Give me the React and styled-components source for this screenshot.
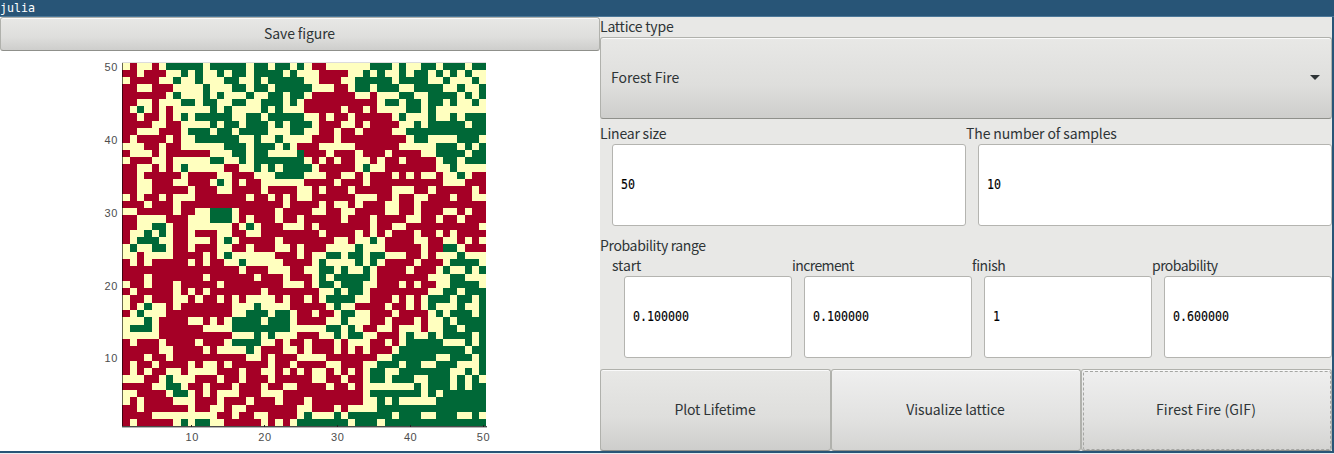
import React from 'react';
import styled, { createGlobalStyle, css } from 'styled-components';

const GlobalStyle = createGlobalStyle`
  html, body { margin: 0; padding: 0; background: #fff; overflow: hidden; }
  *, *::before, *::after { box-sizing: border-box; }
`;

const uiFont = css`
  font-family: "Noto Sans CJK JP", "Open Sans", sans-serif;
  font-size: 14px;
  letter-spacing: ${(p) => (p.$tracking === undefined ? -0.12 : p.$tracking)}px;
  color: #2e3436;
`;

const Window = styled.div`
  width: 1334px;
  height: 454px;
  display: flex;
  flex-direction: column;
  background: #e9ecef;
  ${uiFont}
`;

const TitleBar = styled.header`
  height: 17px;
  background: #285577;
  border-bottom: 1px solid #4c7899;
  color: #fff;
  font-family: "DejaVu Sans Mono", monospace;
  font-size: 11.63px;
  letter-spacing: 0;
  line-height: 16px;
`;

const Content = styled.main`
  height: 436px;
  display: flex;
  border-right: 2px solid #285577;
  border-bottom: 2px solid #285577;
`;

const PlotPane = styled.section`
  width: 600px;
  background: #fff;
  display: flex;
  flex-direction: column;
`;

const ControlPane = styled.section`
  width: 732px;
  background: #e8e8e6;
  display: flex;
  flex-direction: column;
`;

const Button = styled.button`
  ${uiFont}
  position: relative;
  flex: ${(p) => p.$flex || 'none'};
  height: ${(p) => p.$height}px;
  margin: 0;
  padding: 0 11px 2px 10px;
  display: flex;
  align-items: center;
  justify-content: ${(p) => (p.$spread ? 'space-between' : 'center')};
  border: 1px solid #b0b1ac;
  border-bottom-color: #8f908b;
  border-radius: 3px;
  background: ${(p) =>
    p.$bright
      ? 'linear-gradient(#efefef, #e2e2e1 60%, #d4d4d2)'
      : 'linear-gradient(#e8e8e6, #dededc 60%, #cececc)'};
  box-shadow: inset 0 1px 0 #fafafa;
  line-height: 20px;

  ${(p) =>
    p.$focused &&
    css`
      &::after {
        content: '';
        position: absolute;
        inset: 1px 0 0 1px;
        border: 1px dashed #a5a6a3;
        border-radius: 2px;
      }
    `}
`;

const Label = styled.div`
  height: 20px;
  line-height: 18px;
  letter-spacing: ${(p) => (p.$tracking === undefined ? -0.12 : p.$tracking)}px;
  margin-top: ${(p) => p.$gap || 0}px;
  white-space: nowrap;
`;

const FieldRow = styled.div`
  display: flex;
  padding-left: ${(p) => p.$indent || 0}px;
  margin-top: ${(p) => p.$gap || 0}px;
`;

const Field = styled.label`
  flex: 1 1 0;
  min-width: 0;
  display: flex;
  flex-direction: column;
`;

const Entry = styled.div`
  height: 82px;
  margin-left: 12px;
  padding: 0 0 2px 8px;
  display: flex;
  align-items: center;
  background: #fff;
  border: 1px solid #b4b4b0;
  border-radius: 3px;
`;

const EntryText = styled.span`
  font-family: "DejaVu Sans Mono", monospace;
  font-size: 13.5px;
  letter-spacing: 0;
  line-height: 18px;
  color: #000;
  -webkit-text-stroke: 0.15px #000;
  transform: scaleX(0.861);
  transform-origin: left center;
`;

const ButtonRow = styled.div`
  display: flex;
  margin-top: 11px;
`;

const Chart = styled.svg`
  display: block;
  width: 600px;
  height: 400px;
`;

const TickText = styled.text`
  font-family: "Liberation Sans", Arial, sans-serif;
  font-size: 11px;
  letter-spacing: 0.6px;
  fill: #4d4d4d;
`;

/* Each row lists runs: a colour letter and the column where the run ends. */
const LATTICE = [
  'Y1R2Y4R5Y6G11Y12G17Y18G20Y21G23Y24G25Y26R28Y34G37Y38G39Y41G43Y44G47Y48G50',
  'R2Y3R6Y8G9Y10G11Y13G14Y15G17Y18G22Y23G24Y27R31Y33G34Y35G36Y38G39Y40G42Y43G44Y45G46Y47G48Y50',
  'Y1R5Y7G8Y10G11Y14G16Y18G19Y20G25Y27R30Y32G37Y38G42Y44G45Y48G49Y50',
  'R2Y4R7Y11G12Y15G17Y18G20Y21G26Y29R31Y32G34Y35G38Y40G44Y46G47Y49G50',
  'R6Y7G8Y11G12Y13G14Y17G18Y20G22Y23G25Y26R32Y34R35Y38G40Y42G46Y47G48Y49G50',
  'R2Y4R5Y8G10Y11G13Y15G17Y19G22Y23G24Y25R35Y36G38Y39G41Y42G44Y45G46Y48G49Y50',
  'R1Y2G3Y4R5Y6R7Y12G13Y14G15Y19G20Y21G22Y25R30Y31R33Y34R35Y39G41Y42G43Y50',
  'R2Y3R5Y6R7Y8G9Y10G15Y17G19Y20G25Y27R28Y29R31Y32R37Y38G39Y42G43Y45G46Y47G50',
  'R4Y6R8Y12G13Y14G16Y17G20Y21G22Y23G26Y27R30Y32R33Y34R38Y40G41Y42G47Y48G50',
  'R2Y5R8Y9G12Y13G15Y16G20Y23G25Y27R29Y30R32Y33R37Y39G50',
  'R1Y2R6Y7R8Y10G16Y18G19Y21G22Y26R29Y30R39Y40G42Y46G49Y50',
  'Y3R5Y6R8Y14G17Y18G21Y22G23Y24R27Y32R38Y43G46Y47G48Y49G50',
  'R1Y4R5Y6R12Y15G17Y18G20Y24G25R28Y29R32Y33R36Y37R41Y43G47Y48G50',
  'Y1R4Y6R7Y12G14Y16G17Y18G25Y26R27Y28R29Y30R32Y34R35Y36R38Y39R43Y44G46Y47G50',
  'R2Y4R5Y6R7Y8G9Y14R16Y18G19Y20G21Y22G26Y27R32Y33G34Y36R43Y45G46Y50',
  'R2Y3R8Y9R13Y15R18Y21G25Y28R30Y32R33Y34R37Y38R39Y40R41Y43R44Y46G47Y48R50',
  'R2Y4R7Y9R12Y13G14Y15R16Y17R19Y25R29Y30R33Y34R44Y47R50',
  'R2Y4R9Y10R13Y15R19Y20R24Y26R27Y28R31Y32R37Y40R42Y43R48Y49R50',
  'Y1R2Y3R5Y6R7Y10R17Y18R20Y21R22Y23R24Y26R32Y35R37Y38R40Y42R45Y46R48Y50',
  'R3Y4R7Y8R22Y23R27Y28R29Y31R32Y33R36Y38R40Y41R50',
  'Y2R7Y8R10Y12G15Y16R21Y22R26Y28R30Y32R36Y38R40Y41R44Y46R47Y48R50',
  'R2Y6R9Y12G15Y16R17Y18R21Y22R24Y25R30Y31R34Y35R39Y41R43Y44R46Y47R50',
  'R2Y4G6Y7R9Y15R16Y17G18Y19R22Y25R26Y27R34Y35R37Y39R49Y50',
  'R1Y3G4Y5G6Y7R9Y10R13Y15R17Y19R27Y28R32Y33R34Y35R36Y37R40Y41R43Y44R45Y46R50',
  'R1Y2G5Y7R9Y12R13Y14G15Y16R21Y22R29Y31R32Y34G35Y36R40Y42R44Y46R47Y48R49Y50',
  'Y1G2Y4G6Y7R9Y10R13Y15R17Y18R21Y23R24Y25R28Y32G33Y36R41Y42R44G46Y47R50',
  'Y2R3Y7R11Y12R13Y14G15Y21R24Y25R26Y28G30Y31G33Y34G36Y39R41Y42R43Y46G47Y50',
  'R1Y2R3Y4R9Y10R11Y12R14Y16G17Y22R26Y27G28Y32G33Y34G35Y36R40Y41R44Y45G49Y50',
  'R16Y17R20Y23R25Y27G29Y30G31Y33G34Y35R39Y40R43Y44G45Y47G48Y49G50',
  'R3Y4R11Y12R18Y19R22Y23R26Y27G28Y29G34Y35R42Y45G47Y50',
  'Y1R3Y4R7Y8R13Y14R22Y25R26Y27G29Y30G33Y35R38Y39R40Y41R43Y45G49Y50',
  'R1Y2R7Y8R9Y10R11Y12R19Y20R27Y29G30Y31G33Y34R42Y44G46Y47G50',
  'Y1R3Y4R7Y9R10Y11R13Y14R15Y16R17Y21R22Y23R25Y26R27Y28G32Y34R37Y38R39Y40R41Y42G45Y46G48Y49G50',
  'Y1R2Y3G4Y6R7Y8R15Y18G19Y23R28Y29G30Y32R36Y37R39Y40R41Y42G43Y46G47Y49G50',
  'R1Y2G3Y6R15Y17G20Y21G23Y24R26Y27R29Y30G32Y34R37Y38R42Y43G44Y45G48Y49G50',
  'Y3G4Y5R9Y11R12Y13R14Y15G19Y20G23Y24R28Y30G31Y34R36Y37R40Y41R42Y44G45Y46G50',
  'Y1G4Y5R11Y15G23Y28G30Y31G32Y33R35Y37R38Y41R42Y44G46Y47G50',
  'Y5R15Y18G19Y20G21Y24R27Y29G30Y31G33Y35R38Y39G40Y42G43Y44G48Y49G50',
  'R1Y2R5Y6R10Y11R14Y15G19Y21R22Y23R25Y26R29Y30R31Y34R36Y37R38Y39G44Y47G48Y49G50',
  'R5Y7R11Y12R13Y17G18Y19R22Y24R25Y26R29Y30R31Y32R33Y34R37Y38G47Y48G50',
  'R3Y4R6Y7R17Y19R20Y21R24Y28R35Y37G43Y45G48Y49G50',
  'R1Y2R4Y5R9Y10R11Y13R14Y15R20Y21R23Y24R28Y30R33Y35G38Y39G41Y43G46Y49G50',
  'R1Y2R3Y4R6Y8R9Y13R16Y17R19Y21R22Y23R24Y25R26Y28R29Y30R31Y32R33Y34G36Y38G45Y47G48Y49G50',
  'Y3R5Y6G7Y10R13Y14R16Y17R20Y21R26Y28R30Y31R33Y34G36Y37G40Y42G45Y46G47Y48G49Y50',
  'R4Y6G8Y9R11Y12R15Y16R19Y20R22Y24R28Y29R31Y32R33Y40G41Y42G45Y46G47Y48G50',
  'Y2R6Y7G9Y10R11Y12R13Y16R19Y22R33Y34G41Y42G43Y44G50',
  'Y1R2Y3R7Y10R13Y14R17Y18R21Y22R25Y26R33Y35G36Y37G38Y43G50',
  'R2Y3R9Y10R12Y14R15Y17R24Y26R29Y30R31Y35G50',
  'R4Y13R15Y16R18Y20R24Y25G26Y29G30Y31G37Y38G41Y43G46Y48G49Y50',
  'R1Y2R7Y8G9Y10G12Y14R19Y20R21Y22R23Y24G31Y32G35Y36G50',
];

const COLOURS = { R: '#a50026', Y: '#ffffbf', G: '#006837' };
const colX = (k) => Math.ceil(122 + 7.28 * k);
const rowY = (k) => Math.floor(12 + 7.279 * k);

function Lattice() {
  const rects = [];
  LATTICE.forEach((row, r) => {
    let start = 0;
    for (const [, colour, end] of row.matchAll(/([RYG])(\d+)/g)) {
      rects.push(
        <rect
          key={`${r}-${end}`}
          x={colX(start)}
          y={rowY(r)}
          width={colX(+end) - colX(start)}
          height={rowY(r + 1) - rowY(r)}
          fill={COLOURS[colour]}
        />
      );
      start = +end;
    }
  });
  return <g shapeRendering="crispEdges">{rects}</g>;
}

const TICKS = [10, 20, 30, 40, 50];

function LatticeChart() {
  return (
    <Chart viewBox="0 0 600 400">
      <Lattice />
      <g shapeRendering="crispEdges">
        <rect x="122" y="11" width="364" height="1" fill="#dcdcdc" />
        <rect x="122" y="12" width="1" height="364" fill="#000" opacity="0.6" />
        <rect x="122" y="375" width="365" height="1" fill="#4a4a4a" />
        <rect x="122" y="376" width="365" height="1" fill="#b5b5b5" />
        {TICKS.map((t) => (
          <rect key={t} x={Math.round(118.5 + 7.28 * t)} y="374" width="1" height="2" fill="#222" />
        ))}
      </g>
      {TICKS.map((t) => (
        <React.Fragment key={t}>
          <TickText x={119.4 + 7.28 * t} y="390" textAnchor="middle">{t}</TickText>
          <TickText x="118" y={380 - 7.28 * t + 4.2} textAnchor="end">{t}</TickText>
        </React.Fragment>
      ))}
    </Chart>
  );
}

const Arrow = styled.svg`
  width: 10px;
  height: 5px;
`;

function NumberField({ label, value, tracking }) {
  return (
    <Field>
      <Label $tracking={tracking}>{label}</Label>
      <Entry>
        <EntryText>{value}</EntryText>
      </Entry>
    </Field>
  );
}

export default function App() {
  return (
    <>
      <GlobalStyle />
      <Window>
        <TitleBar>julia</TitleBar>
        <Content>
          <PlotPane>
            <Button $height={34}>Save figure</Button>
            <LatticeChart />
          </PlotPane>
          <ControlPane>
            <Label $tracking={-0.22}>Lattice type</Label>
            <Button $height={82} $spread $tracking={0}>
              <span>Forest Fire</span>
              <Arrow viewBox="0 0 10 5">
                <path d="M0 0H10L5 5Z" fill="#2e3436" />
              </Arrow>
            </Button>
            <FieldRow $gap={5}>
              <NumberField label="Linear size" value="50" tracking={-0.2} />
              <NumberField label="The number of samples" value="10" />
            </FieldRow>
            <Label $gap={10} $tracking={-0.36}>Probability range</Label>
            <FieldRow $indent={12}>
              <NumberField label="start" value="0.100000" />
              <NumberField label="increment" value="0.100000" tracking={-0.6} />
              <NumberField label="finish" value="1" tracking={-0.4} />
              <NumberField label="probability" value="0.600000" tracking={-0.55} />
            </FieldRow>
            <ButtonRow>
              <Button $height={82} $flex="0 0 231px">Plot Lifetime</Button>
              <Button $height={82} $flex="0 0 250px" $bright>Visualize lattice</Button>
              <Button $height={82} $flex="0 0 251px" $bright $focused $tracking={0.12}>
                Firest Fire (GIF)
              </Button>
            </ButtonRow>
          </ControlPane>
        </Content>
      </Window>
    </>
  );
}
